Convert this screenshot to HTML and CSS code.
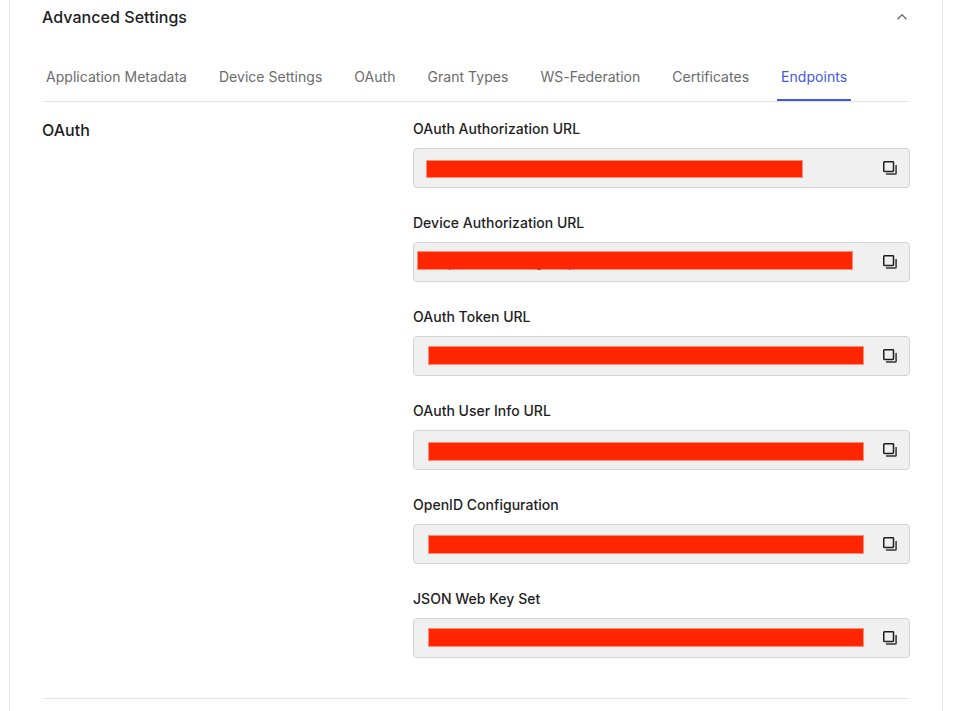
FILE: index.html
```html
<!DOCTYPE html>
<html lang="en">
<head>
<meta charset="utf-8">
<title>Advanced Settings</title>
<link rel="stylesheet" href="styles.css">
</head>
<body>
<svg width="0" height="0" class="defs">
  <symbol id="copy" viewBox="0 0 14 14">
    <path class="back" d="M13.1 4v8.3a.8.8 0 0 1-.8.8H3"/>
    <rect x="0.75" y="0.75" width="9.75" height="9.75" rx="0.7"/>
  </symbol>
</svg>
<main class="panel">
  <header class="panel-header">
    <h2>Advanced Settings</h2>
    <svg class="chevron" viewBox="0 0 10 6"><path d="M0.5 5.2 5 0.8 9.5 5.2"/></svg>
  </header>
  <nav class="tabs">
    <a>Application Metadata</a>
    <a>Device Settings</a>
    <a>OAuth</a>
    <a>Grant Types</a>
    <a>WS-Federation</a>
    <a>Certificates</a>
    <a class="active">Endpoints</a>
  </nav>
  <section class="section">
    <h3>OAuth</h3>
    <div class="fields">
      <div class="field"><label>OAuth Authorization URL</label>
        <div class="input"><span class="redacted first"></span><svg class="copy"><use href="#copy"/></svg></div></div>
      <div class="field"><label>Device Authorization URL</label>
        <div class="input"><span class="redacted second"></span><svg class="copy"><use href="#copy"/></svg></div></div>
      <div class="field"><label>OAuth Token URL</label>
        <div class="input"><span class="redacted third"></span><svg class="copy"><use href="#copy"/></svg></div></div>
      <div class="field"><label>OAuth User Info URL</label>
        <div class="input"><span class="redacted fourth"></span><svg class="copy"><use href="#copy"/></svg></div></div>
      <div class="field"><label>OpenID Configuration</label>
        <div class="input"><span class="redacted fifth"></span><svg class="copy"><use href="#copy"/></svg></div></div>
      <div class="field"><label>JSON Web Key Set</label>
        <div class="input"><span class="redacted sixth"></span><svg class="copy"><use href="#copy"/></svg></div></div>
    </div>
  </section>
</main>
</body>
</html>
```
FILE: styles.css
```css
* { box-sizing: border-box; }
body {
  margin: 0;
  height: 711px;
  overflow: hidden;
  background: #fff;
  color: #1e1e1e;
  font-family: Inter, "Liberation Sans", sans-serif;
}
.defs { display: none; }
.panel {
  width: 934px;
  height: 711px;
  margin-left: 9px;
  padding: 0 32px;
  border: solid #e3e3e3;
  border-width: 0 1px;
}
.panel-header {
  display: flex;
  justify-content: space-between;
  align-items: center;
  height: 34px;
}
h2, h3 {
  margin: 0;
  font-size: 16px;
  line-height: 24px;
  font-weight: 500;
  letter-spacing: 0.05px;
}
.chevron {
  width: 10px;
  height: 6px;
  margin-right: 3px;
  fill: none;
  stroke: #6b6b6b;
  stroke-width: 1.4;
}
.tabs {
  display: flex;
  gap: 24px;
  height: 68px;
  padding-top: 19px;
  border-bottom: 1px solid #e3e3e3;
}
.tabs a {
  padding: 14px 4px 0;
  height: 48px;
  font-size: 14px;
  line-height: 20px;
  letter-spacing: 0.028px;
  color: #6b6b6b;
  white-space: nowrap;
}
.tabs .active { color: #3f59e4; border-bottom: 2px solid #3f59e4; }
.section {
  display: grid;
  grid-template-columns: 371px 497px;
  height: 597px;
  padding-top: 16px;
  border-bottom: 1px solid #e3e3e3;
}
.fields { display: flex; flex-direction: column; gap: 24px; }
.field { height: 70px; }
label {
  display: block;
  height: 30px;
  padding-top: 1px;
  font-size: 14px;
  line-height: 20px;
  font-weight: 500;
  letter-spacing: 0.02px;
}
.input {
  position: relative;
  display: flex;
  align-items: center;
  justify-content: flex-end;
  height: 40px;
  padding-right: 12px;
  background: #f0f0f0;
  border: 1px solid #d3d3d3;
  border-radius: 4px;
}
.copy {
  width: 14px;
  height: 14px;
  fill: none;
  stroke: #1e1e1e;
  stroke-width: 1.5;
}
.back { stroke: #333; }
.redacted {
  position: absolute;
  left: 14px;
  width: 436px;
  height: 19px;
  background: #ff2600;
  border: 1px solid #fa8d7b;
}
.first { left: 12px; top: 11px; width: 377px; height: 18px; }
.second { left: 3px; top: 8px; }
/* descender tips of the covered URL */
.second::after {
  content: "";
  position: absolute;
  left: 31px;
  bottom: -1px;
  width: 1px;
  height: 1px;
  background: #8c3a2c;
  box-shadow: 88px 0 #b8604f, 89px 0 #8c3a2c, 90px 0 #8c3a2c, 91px 0 #b8604f, 120px 0 #8c3a2c;
}
.third { top: 9px; }
.fourth { top: 11px; }
.fifth { top: 10px; }
.sixth { top: 9px; }
```
